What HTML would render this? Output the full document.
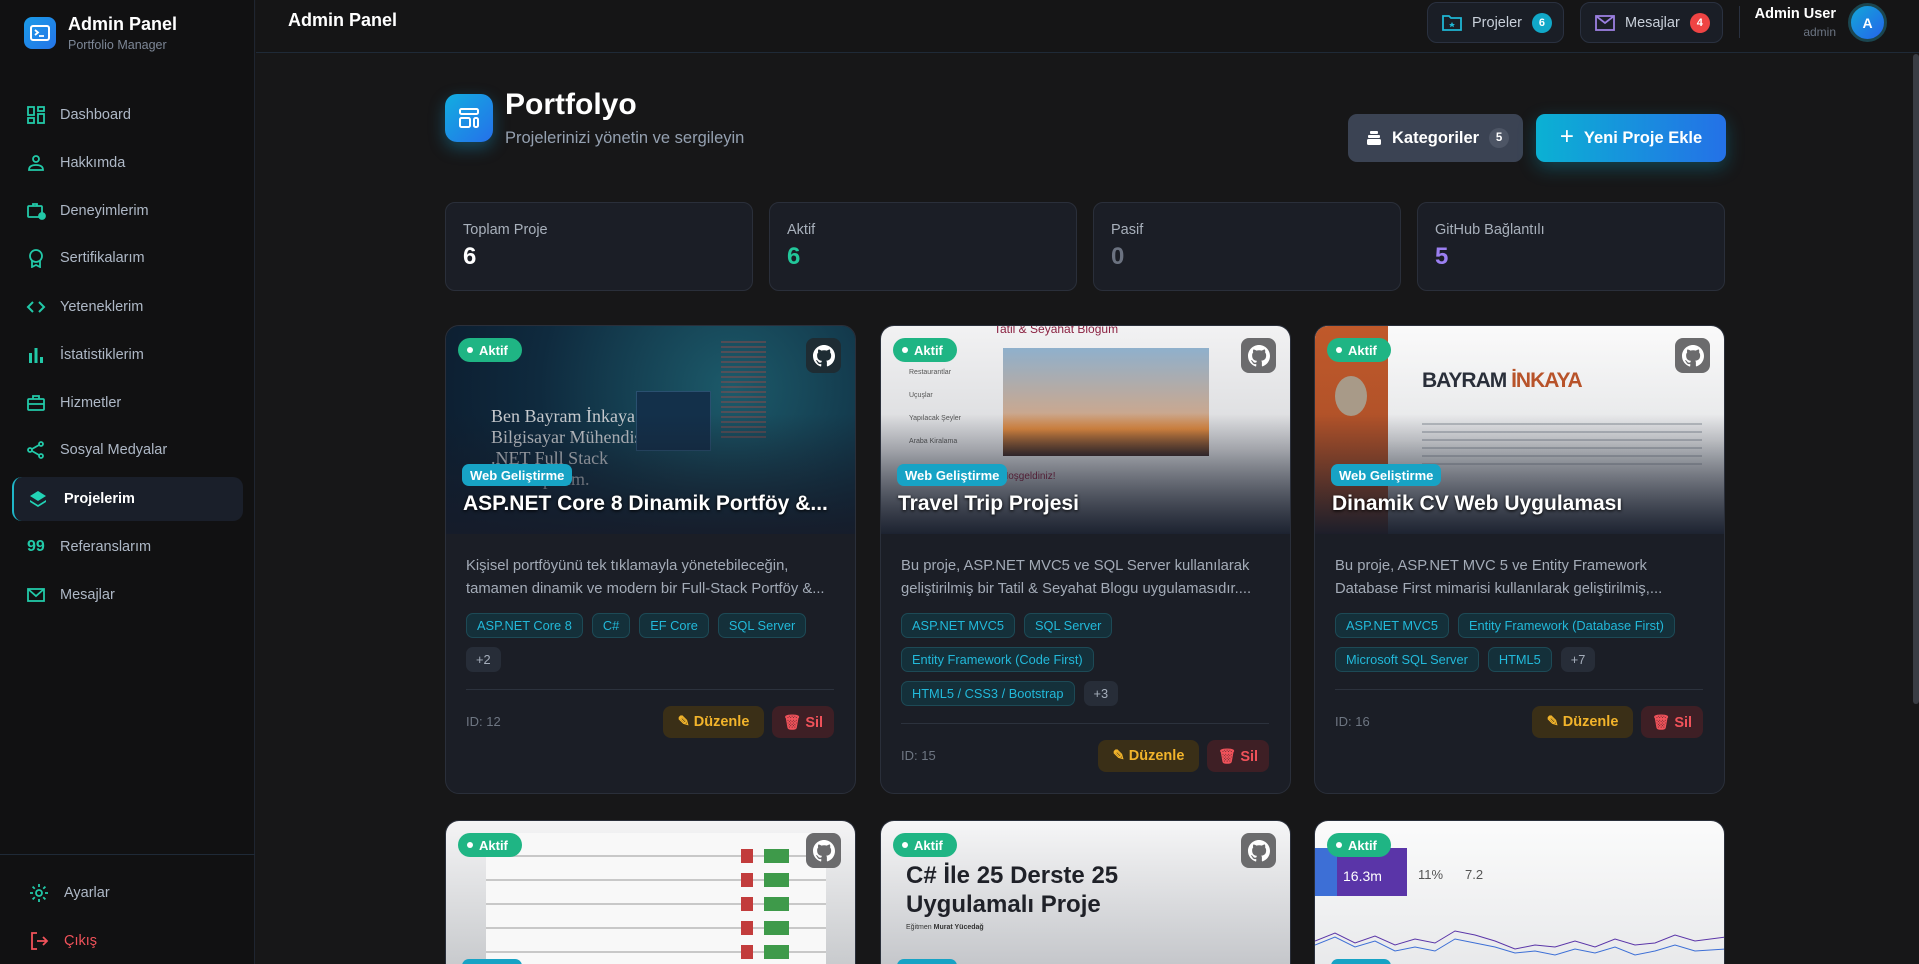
<!DOCTYPE html>
<html><head><meta charset="utf-8"><style>
*{box-sizing:border-box;margin:0;padding:0}
html,body{width:1919px;height:964px;overflow:hidden}
body{background:#171718;font-family:"Liberation Sans",sans-serif;color:#fff}
#root{position:relative;width:1919px;height:964px;overflow:hidden;background:#171718}
.sb{position:absolute;left:0;top:0;width:255px;height:964px;background:#111112;border-right:1px solid #1f2530}
.logo{position:absolute;left:24px;top:17px;width:32px;height:32px;border-radius:8px;background:linear-gradient(135deg,#1a9be8,#2574e8)}
.nav{position:absolute;left:0;width:255px;height:44px;display:flex;align-items:center;font-size:14.5px;color:#aeb8c6}
.nav svg{position:absolute;left:26px;width:20px;height:20px}
.nav span{position:absolute;left:60px}
.act{left:12px;width:231px;background:#1a1f2a;border-radius:10px;border-left:2px solid #1fb6c8;color:#fff;font-weight:bold}
.act svg{left:14px}.act span{left:50px}
.hdr{position:absolute;left:256px;top:0;right:0;height:53px;border-bottom:1px solid #1f2a37;background:#151516}
.hb{position:absolute;top:2px;height:41px;border:1px solid #2a3140;border-radius:10px;background:#1a1e26;display:flex;align-items:center;font-size:14.5px;color:#c9d0da}
.badge{display:inline-flex;width:18px;height:18px;border-radius:9px;align-items:center;justify-content:center;font-size:11px;font-weight:bold;color:#fff}
.stat{position:absolute;top:202px;width:308px;height:89px;background:#1b1e26;border:1px solid #2a2f3a;border-radius:10px}
.stat .l{position:absolute;left:17px;top:19px;font-size:14.5px;color:#a8b0bb}
.stat .v{position:absolute;left:17px;top:40px;font-size:24px;font-weight:bold}
.card{position:absolute;width:411px;height:469px;background:#1b1e26;border:1px solid #2a2f3a;border-radius:14px;overflow:hidden}
.img{position:absolute;left:0;top:0;width:100%;height:208px;overflow:hidden}
.ov{position:absolute;left:0;right:0;bottom:0;height:120px;background:linear-gradient(rgba(27,30,38,0),rgba(22,28,42,.95))}
.akt{position:absolute;left:12px;top:12px;width:64px;height:24px;border-radius:12px;background:#1fb584;font-size:13px;font-weight:bold;display:flex;align-items:center;padding-left:9px}
.akt:before{content:"";width:6px;height:6px;border-radius:3px;background:#fff;margin-right:6px}
.gh{position:absolute;right:14px;top:12px;width:35px;height:35px;border-radius:8px;background:#6b6b6d;display:flex;align-items:center;justify-content:center}
.chip{position:absolute;left:16px;top:138px;height:22px;padding:0 8px;border-radius:7px;background:#17a3c5;font-size:13px;font-weight:bold;display:flex;align-items:center}
.ttl{position:absolute;left:17px;top:166px;font-size:21px;font-weight:bold;white-space:nowrap;text-shadow:0 1px 3px #000}
.body{position:absolute;left:20px;right:21px;top:229px}
.desc{font-size:14.8px;line-height:23px;color:#a3abb7;height:46px;overflow:hidden}
.tags{margin-top:12px;display:flex;flex-wrap:wrap;gap:9px 9px}
.tag{height:25px;padding:0 10px;border:1px solid #1d4a56;background:#14303a;border-radius:7px;color:#22b9da;font-size:12.8px;display:flex;align-items:center}
.more{height:25px;padding:0 10px;background:#272d38;border-radius:7px;color:#a5aebb;font-size:12.8px;display:flex;align-items:center}
.div{height:1px;background:#2c323d;margin-top:17px}
.ft{margin-top:16px;height:32px;position:relative}
.id{position:absolute;left:0;top:8px;font-size:13px;color:#6e7682}
.ed{position:absolute;right:70px;top:0;width:101px;height:32px;border-radius:8px;background:#3a2f17;color:#f2b42b;font-size:14.5px;font-weight:bold;display:flex;align-items:center;justify-content:center;gap:7px}
.sl{position:absolute;right:0;top:0;width:62px;height:32px;border-radius:8px;background:#3e1f25;color:#f0525a;font-size:14.5px;font-weight:bold;display:flex;align-items:center;justify-content:center;gap:7px}
</style></head><body><div id="root">
<div class="sb">
 <div class="logo"><svg width="32" height="32" viewBox="0 0 32 32"><rect x="7" y="9" width="18" height="14" rx="2" fill="none" stroke="#fff" stroke-width="2"/><path d="M11 13l3 2.5-3 2.5M15 19h5" stroke="#fff" stroke-width="1.8" fill="none"/></svg></div>
 <div style="position:absolute;left:68px;top:14px;font-size:18px;font-weight:bold">Admin Panel</div>
 <div style="position:absolute;left:68px;top:38px;font-size:12.5px;color:#7d8796">Portfolio Manager</div>
 <div class="nav" style="top:93px"><svg viewBox="0 0 20 20" fill="none" stroke="#22c9a8" stroke-width="1.8"><rect x="2" y="2" width="6" height="8"/><rect x="2" y="13" width="6" height="5"/><rect x="12" y="2" width="6" height="4"/><rect x="12" y="9" width="6" height="9"/></svg><span>Dashboard</span></div>
 <div class="nav" style="top:141px"><svg viewBox="0 0 20 20" fill="none" stroke="#22c9a8" stroke-width="1.8"><circle cx="10" cy="6" r="3"/><path d="M3 17c0-4 3-5 7-5s7 1 7 5z"/></svg><span>Hakkımda</span></div>
 <div class="nav" style="top:189px"><svg viewBox="0 0 20 20" fill="none" stroke="#22c9a8" stroke-width="1.8"><rect x="2" y="5" width="14" height="11" rx="1"/><path d="M7 5V3h4v2"/><circle cx="16" cy="15" r="3" fill="#22c9a8"/></svg><span>Deneyimlerim</span></div>
 <div class="nav" style="top:236px"><svg viewBox="0 0 20 20" fill="none" stroke="#22c9a8" stroke-width="1.8"><circle cx="10" cy="8" r="6"/><path d="M6 13v6l4-2 4 2v-6"/></svg><span>Sertifikalarım</span></div>
 <div class="nav" style="top:285px"><svg viewBox="0 0 20 20" fill="none" stroke="#22c9a8" stroke-width="2"><path d="M7 5l-5 5 5 5M13 5l5 5-5 5"/></svg><span>Yeteneklerim</span></div>
 <div class="nav" style="top:333px"><svg viewBox="0 0 20 20" fill="#22c9a8"><rect x="3" y="8" width="3" height="10"/><rect x="8.5" y="3" width="3" height="15"/><rect x="14" y="12" width="3" height="6"/></svg><span>İstatistiklerim</span></div>
 <div class="nav" style="top:381px"><svg viewBox="0 0 20 20" fill="none" stroke="#22c9a8" stroke-width="1.8"><rect x="2" y="6" width="16" height="11" rx="1"/><path d="M7 6V3h6v3M2 11h16"/></svg><span>Hizmetler</span></div>
 <div class="nav" style="top:428px"><svg viewBox="0 0 20 20" fill="none" stroke="#22c9a8" stroke-width="1.8"><circle cx="15" cy="4" r="2"/><circle cx="4" cy="10" r="2"/><circle cx="15" cy="16" r="2"/><path d="M6 9l7-4M6 11l7 4"/></svg><span>Sosyal Medyalar</span></div>
 <div class="nav act" style="top:477px"><svg viewBox="0 0 20 20" fill="#22d3b6"><path d="M10 2l8 5-8 5-8-5z"/><path d="M2 11l8 5 8-5v2l-8 5-8-5z"/></svg><span>Projelerim</span></div>
 <div class="nav" style="top:525px"><span style="left:27px;color:#22c9a8;font-weight:bold;font-size:16px">99</span><span>Referanslarım</span></div>
 <div class="nav" style="top:573px"><svg viewBox="0 0 20 20" fill="none" stroke="#22c9a8" stroke-width="1.8"><rect x="2" y="4" width="16" height="12"/><path d="M2 4l8 7 8-7"/></svg><span>Mesajlar</span></div>
 <div style="position:absolute;left:0;top:854px;width:255px;height:1px;background:#1f2a37"></div>
 <div class="nav" style="top:871px"><svg viewBox="0 0 20 20" fill="none" stroke="#22c9a8" stroke-width="1.8" style="left:29px"><circle cx="10" cy="10" r="3"/><path d="M10 1v3M10 16v3M1 10h3M16 10h3M3.6 3.6l2.2 2.2M14.2 14.2l2.2 2.2M3.6 16.4l2.2-2.2M14.2 5.8l2.2-2.2"/></svg><span style="left:64px">Ayarlar</span></div>
 <div class="nav" style="top:919px;color:#f0525a"><svg viewBox="0 0 20 20" fill="none" stroke="#f0525a" stroke-width="1.8" style="left:29px"><path d="M8 2H3v16h5M8 10h10M14 6l4 4-4 4"/></svg><span style="left:64px">Çıkış</span></div>
</div>
<div class="hdr">
 <div style="position:absolute;left:32px;top:10px;font-size:18px;font-weight:bold">Admin Panel</div>
 <div class="hb" style="left:1171px;width:137px;padding-left:14px"><svg width="20" height="18" viewBox="0 0 20 18" fill="none" stroke="#1fb6d4" stroke-width="1.8"><path d="M1 2h6l2 2h10v12H1z"/><path d="M10 8l1 2h2l-1.5 1.3.5 2-2-1.2-2 1.2.5-2L7 10h2z" fill="#1fb6d4" stroke="none"/></svg><span style="margin:0 10px 0 10px">Projeler</span><span class="badge" style="background:#11a8c8;width:20px;height:20px;border-radius:10px">6</span></div>
 <div class="hb" style="left:1324px;width:143px;padding-left:14px"><svg width="20" height="16" viewBox="0 0 20 16" fill="none" stroke="#9b7fe0" stroke-width="1.8"><rect x="1" y="1" width="18" height="14"/><path d="M1 1l9 7 9-7"/></svg><span style="margin:0 10px 0 10px">Mesajlar</span><span class="badge" style="background:#ef4444;width:20px;height:20px;border-radius:10px">4</span></div>
 <div style="position:absolute;left:1483px;top:6px;width:1px;height:32px;background:#2a3140"></div>
 <div style="position:absolute;right:83px;top:6px;font-size:14.5px;font-weight:bold;text-align:right">Admin User</div>
 <div style="position:absolute;right:83px;top:25px;font-size:12px;color:#6b7482">admin</div>
 <div style="position:absolute;left:1592px;top:3px;width:39px;height:39px;border-radius:50%;border:3px solid #1b4650;background:linear-gradient(135deg,#13a7d8,#2563eb);display:flex;align-items:center;justify-content:center;font-weight:bold;font-size:14px">A</div>
</div>
<div style="position:absolute;left:1913px;top:54px;width:6px;height:650px;background:#3a3d44;border-radius:3px"></div>
<div style="position:absolute;left:445px;top:94px;width:48px;height:48px;border-radius:12px;background:linear-gradient(135deg,#12aee0,#2570ea);box-shadow:0 6px 16px rgba(19,170,220,.35);display:flex;align-items:center;justify-content:center"><svg width="22" height="22" viewBox="0 0 22 22" fill="none" stroke="#fff" stroke-width="2"><rect x="2" y="2" width="18" height="5" rx="1.5"/><rect x="2" y="11" width="10" height="9" rx="1.5"/><rect x="16" y="11" width="4" height="9" rx="1.5"/></svg></div>
<div style="position:absolute;left:505px;top:88px;font-size:30px;font-weight:bold">Portfolyo</div>
<div style="position:absolute;left:505px;top:129px;font-size:16.5px;color:#94a0b0">Projelerinizi yönetin ve sergileyin</div>
<div style="position:absolute;left:1348px;top:114px;width:175px;height:48px;border-radius:9px;background:#3b4353;display:flex;align-items:center;padding-left:18px;font-size:16.5px;font-weight:bold"><svg width="16" height="16" viewBox="0 0 16 16" fill="#fff"><rect x="4" y="1" width="8" height="3" rx="1"/><rect x="2" y="5" width="12" height="3" rx="1"/><rect x="1" y="9" width="14" height="6" rx="1.5"/></svg><span style="margin:0 10px 0 10px">Kategoriler</span><span class="badge" style="background:#4d5565;width:20px;height:20px;border-radius:10px;font-size:11.5px">5</span></div>
<div style="position:absolute;left:1536px;top:114px;width:190px;height:48px;border-radius:9px;background:linear-gradient(90deg,#0bb1d3,#2471e7);box-shadow:0 6px 18px rgba(11,177,211,.3);display:flex;align-items:center;justify-content:center;font-size:16.5px;font-weight:bold"><span style="font-size:24px;font-weight:normal;margin-right:10px;margin-top:-3px">+</span>Yeni Proje Ekle</div>
<div class="stat" style="left:445px"><div class="l">Toplam Proje</div><div class="v">6</div></div>
<div class="stat" style="left:769px"><div class="l">Aktif</div><div class="v" style="color:#22c79a">6</div></div>
<div class="stat" style="left:1093px"><div class="l">Pasif</div><div class="v" style="color:#6b7280">0</div></div>
<div class="stat" style="left:1417px"><div class="l">GitHub Bağlantılı</div><div class="v" style="color:#9b7ff0">5</div></div>

<!-- card 1 -->
<div class="card" style="left:445px;top:325px">
 <div class="img" style="background:radial-gradient(circle at 70% 30%,#1c5a6a,#0f2a3e 60%,#0c1c2e)">
  <div style="position:absolute;left:45px;top:80px;font-family:'Liberation Serif',serif;font-size:18px;line-height:21px;color:#c9ccd0">Ben Bayram İnkaya<br>Bilgisayar Mühendisiyim<br>.NET Full Stack<br>Developerım.</div>
  <div style="position:absolute;left:190px;top:65px;width:75px;height:60px;background:#13304a;border:1px solid #2a5070"></div>
  <div style="position:absolute;left:275px;top:15px;width:45px;height:100px;background:repeating-linear-gradient(#8a4a4a 0 2px,transparent 2px 5px);opacity:.5"></div>
  <div class="ov"></div>
  <div class="akt">Aktif</div>
  <div class="gh" style="background:#1e2c33"><svg width="22" height="22" viewBox="0 0 16 16" fill="#fff"><path d="M8 0C3.6 0 0 3.6 0 8c0 3.5 2.3 6.5 5.5 7.6.4.1.5-.2.5-.4v-1.4c-2.2.5-2.7-1-2.7-1-.4-.9-.9-1.2-.9-1.2-.7-.5.1-.5.1-.5.8.1 1.2.8 1.2.8.7 1.3 1.9.9 2.4.7.1-.5.3-.9.5-1.1-1.8-.2-3.6-.9-3.6-4 0-.9.3-1.6.8-2.1-.1-.2-.4-1 .1-2.1 0 0 .7-.2 2.2.8.6-.2 1.3-.3 2-.3s1.4.1 2 .3c1.5-1 2.2-.8 2.2-.8.4 1.1.2 1.9.1 2.1.5.6.8 1.3.8 2.1 0 3.1-1.9 3.7-3.6 3.9.3.3.5.8.5 1.5v2.2c0 .2.1.5.6.4C13.7 14.5 16 11.5 16 8c0-4.4-3.6-8-8-8z"/></svg></div>
  <div class="chip">Web Geliştirme</div>
  <div class="ttl">ASP.NET Core 8 Dinamik Portföy &amp;...</div>
 </div>
 <div class="body">
  <div class="desc">Kişisel portföyünü tek tıklamayla yönetebileceğin, tamamen dinamik ve modern bir Full-Stack Portföy &amp;...</div>
  <div class="tags"><span class="tag">ASP.NET Core 8</span><span class="tag">C#</span><span class="tag">EF Core</span><span class="tag">SQL Server</span><span class="more">+2</span></div>
  <div class="div"></div>
  <div class="ft"><span class="id">ID: 12</span><span class="ed">✎ Düzenle</span><span class="sl">🗑 Sil</span></div>
 </div>
</div>
<!-- card 2 -->
<div class="card" style="left:880px;top:325px">
 <div class="img" style="background:linear-gradient(#f2f2f3,#d8d9dc 60%,#9fa3ab)">
  <div style="position:absolute;left:113px;top:-4px;font-size:12px;color:#8a2040">Tatil &amp; Seyahat Bloğum</div>
  <div style="position:absolute;left:122px;top:22px;width:206px;height:108px;background:linear-gradient(#8fb0cc,#c9a890 60%,#e08a40 75%,#3a2a2a)"></div>
  <div style="position:absolute;left:28px;top:35px;font-size:7px;line-height:23px;color:#555">Restaurantlar<br>Uçuşlar<br>Yapılacak Şeyler<br>Araba Kiralama</div>
  <div style="position:absolute;left:120px;top:145px;font-size:10px;color:#8a2040">Hoşgeldiniz!</div>
  <div class="ov"></div>
  <div class="akt">Aktif</div>
  <div class="gh"><svg width="22" height="22" viewBox="0 0 16 16" fill="#fff"><path d="M8 0C3.6 0 0 3.6 0 8c0 3.5 2.3 6.5 5.5 7.6.4.1.5-.2.5-.4v-1.4c-2.2.5-2.7-1-2.7-1-.4-.9-.9-1.2-.9-1.2-.7-.5.1-.5.1-.5.8.1 1.2.8 1.2.8.7 1.3 1.9.9 2.4.7.1-.5.3-.9.5-1.1-1.8-.2-3.6-.9-3.6-4 0-.9.3-1.6.8-2.1-.1-.2-.4-1 .1-2.1 0 0 .7-.2 2.2.8.6-.2 1.3-.3 2-.3s1.4.1 2 .3c1.5-1 2.2-.8 2.2-.8.4 1.1.2 1.9.1 2.1.5.6.8 1.3.8 2.1 0 3.1-1.9 3.7-3.6 3.9.3.3.5.8.5 1.5v2.2c0 .2.1.5.6.4C13.7 14.5 16 11.5 16 8c0-4.4-3.6-8-8-8z"/></svg></div>
  <div class="chip">Web Geliştirme</div>
  <div class="ttl">Travel Trip Projesi</div>
 </div>
 <div class="body">
  <div class="desc">Bu proje, ASP.NET MVC5 ve SQL Server kullanılarak geliştirilmiş bir Tatil &amp; Seyahat Blogu uygulamasıdır....</div>
  <div class="tags"><span class="tag">ASP.NET MVC5</span><span class="tag">SQL Server</span><span class="tag">Entity Framework (Code First)</span><span class="tag">HTML5 / CSS3 / Bootstrap</span><span class="more">+3</span></div>
  <div class="div"></div>
  <div class="ft"><span class="id">ID: 15</span><span class="ed">✎ Düzenle</span><span class="sl">🗑 Sil</span></div>
 </div>
</div>
<!-- card 3 -->
<div class="card" style="left:1314px;top:325px">
 <div class="img" style="background:linear-gradient(#fafafa,#e5e6e8 55%,#a7abb3)">
  <div style="position:absolute;left:0;top:0;width:73px;height:208px;background:linear-gradient(#c0592a,#a04a28)"></div>
  <div style="position:absolute;left:20px;top:50px;width:32px;height:40px;border-radius:50%;background:#a89a88"></div>
  <div style="position:absolute;left:107px;top:43px;font-size:21px;font-weight:bold;color:#2a2f3a;letter-spacing:-1px">BAYRAM <span style="color:#b8532a">İNKAYA</span></div>
  <div style="position:absolute;left:107px;top:97px;width:280px;height:45px;background:repeating-linear-gradient(#9aa0a8 0 2px,transparent 2px 8px);opacity:.6"></div>
  <div class="ov"></div>
  <div class="akt">Aktif</div>
  <div class="gh"><svg width="22" height="22" viewBox="0 0 16 16" fill="#fff"><path d="M8 0C3.6 0 0 3.6 0 8c0 3.5 2.3 6.5 5.5 7.6.4.1.5-.2.5-.4v-1.4c-2.2.5-2.7-1-2.7-1-.4-.9-.9-1.2-.9-1.2-.7-.5.1-.5.1-.5.8.1 1.2.8 1.2.8.7 1.3 1.9.9 2.4.7.1-.5.3-.9.5-1.1-1.8-.2-3.6-.9-3.6-4 0-.9.3-1.6.8-2.1-.1-.2-.4-1 .1-2.1 0 0 .7-.2 2.2.8.6-.2 1.3-.3 2-.3s1.4.1 2 .3c1.5-1 2.2-.8 2.2-.8.4 1.1.2 1.9.1 2.1.5.6.8 1.3.8 2.1 0 3.1-1.9 3.7-3.6 3.9.3.3.5.8.5 1.5v2.2c0 .2.1.5.6.4C13.7 14.5 16 11.5 16 8c0-4.4-3.6-8-8-8z"/></svg></div>
  <div class="chip">Web Geliştirme</div>
  <div class="ttl">Dinamik CV Web Uygulaması</div>
 </div>
 <div class="body">
  <div class="desc">Bu proje, ASP.NET MVC 5 ve Entity Framework Database First mimarisi kullanılarak geliştirilmiş,...</div>
  <div class="tags"><span class="tag">ASP.NET MVC5</span><span class="tag">Entity Framework (Database First)</span><span class="tag">Microsoft SQL Server</span><span class="tag">HTML5</span><span class="more">+7</span></div>
  <div class="div"></div>
  <div class="ft"><span class="id">ID: 16</span><span class="ed">✎ Düzenle</span><span class="sl">🗑 Sil</span></div>
 </div>
</div>
<!-- row 2 -->
<div class="card" style="left:445px;top:820px">
 <div class="img" style="background:linear-gradient(#f4f4f5,#c8cacd 70%,#9a9da3)">
  <div style="position:absolute;left:40px;top:12px;width:340px;height:140px;background:repeating-linear-gradient(#f8f8f8 0 22px,#c8c8c8 22px 24px)"></div>
  <div style="position:absolute;left:295px;top:28px;width:12px;height:120px;background:repeating-linear-gradient(#c23c3c 0 14px,transparent 14px 24px)"></div>
  <div style="position:absolute;left:318px;top:28px;width:25px;height:120px;background:repeating-linear-gradient(#3e9a4a 0 14px,transparent 14px 24px)"></div>
  <div class="akt">Aktif</div>
  <div class="gh"><svg width="22" height="22" viewBox="0 0 16 16" fill="#fff"><path d="M8 0C3.6 0 0 3.6 0 8c0 3.5 2.3 6.5 5.5 7.6.4.1.5-.2.5-.4v-1.4c-2.2.5-2.7-1-2.7-1-.4-.9-.9-1.2-.9-1.2-.7-.5.1-.5.1-.5.8.1 1.2.8 1.2.8.7 1.3 1.9.9 2.4.7.1-.5.3-.9.5-1.1-1.8-.2-3.6-.9-3.6-4 0-.9.3-1.6.8-2.1-.1-.2-.4-1 .1-2.1 0 0 .7-.2 2.2.8.6-.2 1.3-.3 2-.3s1.4.1 2 .3c1.5-1 2.2-.8 2.2-.8.4 1.1.2 1.9.1 2.1.5.6.8 1.3.8 2.1 0 3.1-1.9 3.7-3.6 3.9.3.3.5.8.5 1.5v2.2c0 .2.1.5.6.4C13.7 14.5 16 11.5 16 8c0-4.4-3.6-8-8-8z"/></svg></div>
  <div class="chip" style="width:60px"></div>
 </div>
</div>
<div class="card" style="left:880px;top:820px">
 <div class="img" style="background:linear-gradient(#f6f6f7,#c4c6ca 70%,#8e9198)">
  <div style="position:absolute;left:25px;top:40px;font-size:24px;font-weight:bold;color:#1f2128;line-height:29px">C# İle 25 Derste 25<br>Uygulamalı Proje</div>
  <div style="position:absolute;left:25px;top:103px;font-size:7px;color:#333">Eğitmen <b>Murat Yücedağ</b></div>
  <div class="akt">Aktif</div>
  <div class="gh"><svg width="22" height="22" viewBox="0 0 16 16" fill="#fff"><path d="M8 0C3.6 0 0 3.6 0 8c0 3.5 2.3 6.5 5.5 7.6.4.1.5-.2.5-.4v-1.4c-2.2.5-2.7-1-2.7-1-.4-.9-.9-1.2-.9-1.2-.7-.5.1-.5.1-.5.8.1 1.2.8 1.2.8.7 1.3 1.9.9 2.4.7.1-.5.3-.9.5-1.1-1.8-.2-3.6-.9-3.6-4 0-.9.3-1.6.8-2.1-.1-.2-.4-1 .1-2.1 0 0 .7-.2 2.2.8.6-.2 1.3-.3 2-.3s1.4.1 2 .3c1.5-1 2.2-.8 2.2-.8.4 1.1.2 1.9.1 2.1.5.6.8 1.3.8 2.1 0 3.1-1.9 3.7-3.6 3.9.3.3.5.8.5 1.5v2.2c0 .2.1.5.6.4C13.7 14.5 16 11.5 16 8c0-4.4-3.6-8-8-8z"/></svg></div>
  <div class="chip" style="width:60px"></div>
 </div>
</div>
<div class="card" style="left:1314px;top:820px">
 <div class="img" style="background:linear-gradient(#fbfbfb,#e8e9eb 70%,#c5c7cb)">
  <div style="position:absolute;left:0;top:27px;width:22px;height:48px;background:#3d6fd6"></div>
  <div style="position:absolute;left:22px;top:27px;width:70px;height:48px;background:#5a35a8;color:#fff;font-size:14px;padding:20px 0 0 6px">16.3m</div>
  <div style="position:absolute;left:103px;top:46px;font-size:13px;color:#555">11%</div>
  <div style="position:absolute;left:150px;top:46px;font-size:13px;color:#555">7.2</div>
  <svg style="position:absolute;left:0;top:100px" width="411" height="40"><polyline fill="none" stroke="#5a35a8" stroke-width="1" points="0,20 20,12 40,22 60,15 80,24 100,18 120,22 140,10 160,14 180,20 200,28 220,24 240,26 260,20 280,26 300,18 320,24 340,22 360,14 380,20 411,16"/><polyline fill="none" stroke="#3d6fd6" stroke-width="1" points="0,24 20,16 40,26 60,20 80,30 100,26 120,30 140,18 160,22 180,26 200,32 220,30 240,34 260,28 280,32 300,26 320,34 340,30 360,24 380,30 411,28"/></svg>
  <div class="akt">Aktif</div>
  <div class="chip" style="width:60px"></div>
 </div>
</div>
</div></body></html>
